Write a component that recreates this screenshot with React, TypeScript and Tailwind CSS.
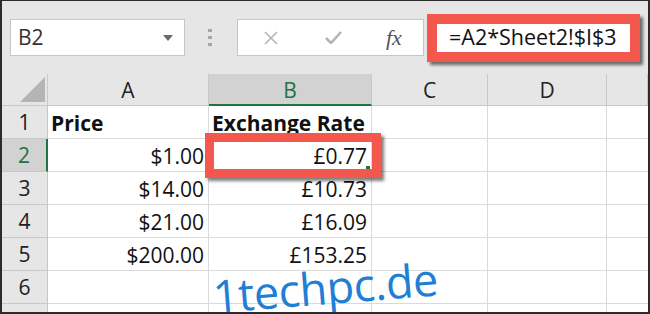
import React from 'react';

const cols = ['A', 'B', 'C', 'D', 'E'];

const rows: { a: string; b: string; bold?: boolean }[] = [
  { a: 'Price', b: 'Exchange Rate', bold: true },
  { a: '$1.00', b: '£0.77' },
  { a: '$14.00', b: '£10.73' },
  { a: '$21.00', b: '£16.09' },
  { a: '$200.00', b: '£153.25' },
  { a: '', b: '' },
  { a: '', b: '' },
];

const App: React.FC = () => {
  return (
    <div className="w-[650px] h-[314px] overflow-hidden border-t border-x-2 border-b-2 border-[#2b2b2b] bg-[#e6e6e6] flex flex-col font-['Open_Sans',sans-serif]">
      {/* formula bar */}
      <div className="h-[73px] shrink-0 flex items-center pl-[8px]">
        <div className="w-[175px] h-[37px] bg-white border border-[#c6c6c6] flex items-center justify-between pl-[7px] pr-[11px]">
          <span className="text-[21px] text-[#333]">B2</span>
          <svg width="10" height="6" viewBox="0 0 10 6">
            <path d="M0 0 L10 0 L5 6 Z" fill="#6b6b6b" />
          </svg>
        </div>
        <div className="ml-[23px] w-[4px] flex flex-col gap-[4px]">
          <div className="w-[4px] h-[3px] bg-[#a6a6a6]" />
          <div className="w-[4px] h-[3px] bg-[#a6a6a6]" />
          <div className="w-[4px] h-[3px] bg-[#a6a6a6]" />
        </div>
        <div className="ml-[25px] w-[187px] h-[37px] bg-white border border-[#c6c6c6] flex items-center">
          <svg className="ml-[26px]" width="14" height="14" viewBox="0 0 14 14">
            <path d="M1 1 L13 13 M13 1 L1 13" stroke="#b3b3b3" strokeWidth="1.6" />
          </svg>
          <svg className="ml-[47px]" width="17" height="13" viewBox="0 0 17 13">
            <path d="M1 7 L6 12 L16 1" stroke="#b3b3b3" strokeWidth="2.6" fill="none" />
          </svg>
          <span className="ml-[44px] text-[22px] italic text-[#555] font-['Liberation_Serif',serif] leading-none">fx</span>
        </div>
        <div className="ml-[3px] w-[213px] h-[48px] border-[10px] border-[#f4574b] bg-white shadow-[3px_3px_3px_rgba(0,0,0,0.55)] flex items-center pl-[12px]">
          <span className="text-[21.5px] text-[#111] whitespace-nowrap">=A2*Sheet2!$I$3</span>
        </div>
      </div>

      {/* grid */}
      <div className="relative flex-1 bg-white">
        <div className="grid grid-cols-[46px_161px_163px_116px_119px_1fr] grid-rows-[32px_repeat(7,33px)]">
          <div className="relative bg-[#e6e6e6] border-r border-b border-[#c8c8c8]">
            <div className="absolute right-[2px] bottom-[3px] w-0 h-0 border-l-[25px] border-l-transparent border-b-[25px] border-b-[#b4b4b4]" />
          </div>
          {cols.map((c) => (
            <div
              key={c}
              className={
                c === 'B'
                  ? 'bg-[#d2d2d2] border-r border-[#c8c8c8] border-b-2 border-b-[#217346] flex items-center justify-center pt-[3px] text-[21px] text-[#217346]'
                  : 'bg-[#e6e6e6] border-r border-b border-[#c8c8c8] flex items-center justify-center pt-[3px] text-[21px] text-[#222]'
              }
            >
              {c === 'E' ? '' : c}
            </div>
          ))}
          {rows.map((r, i) => (
            <React.Fragment key={i}>
              <div
                className={
                  i === 1
                    ? 'bg-[#d2d2d2] border-b border-[#c8c8c8] border-r-2 border-r-[#217346] flex items-center justify-center pt-[2px] text-[21px] text-[#217346]'
                    : 'bg-[#e6e6e6] border-r border-b border-[#c8c8c8] flex items-center justify-center pt-[2px] text-[21px] text-[#222]'
                }
              >
                {i < 6 ? i + 1 : ''}
              </div>
              <div
                className={`border-r border-b border-[#dadada] flex items-center pt-[4px] text-[21px] text-[#111] whitespace-nowrap ${
                  r.bold ? 'font-bold justify-start pl-[3px]' : 'justify-end pr-[4px]'
                }`}
              >
                {r.a}
              </div>
              <div
                className={`relative border-r border-b border-[#dadada] flex items-center pt-[4px] text-[21px] text-[#111] whitespace-nowrap ${
                  r.bold ? 'font-bold justify-start pl-[3px]' : 'justify-end pr-[4px]'
                }`}
              >
                {r.b}
                {i === 1 && <div className="absolute right-[1px] bottom-[1px] w-[4px] h-[4px] bg-[#217346]" />}
              </div>
              <div className="border-r border-b border-[#dadada]" />
              <div className="border-r border-b border-[#dadada]" />
              <div className="border-b border-[#dadada]" />
            </React.Fragment>
          ))}
        </div>

        {/* annotation around B2 */}
        <div className="absolute left-[203px] top-[59px] w-[176px] h-[45px] border-[9px] border-[#f4574b] shadow-[3px_3px_3px_rgba(0,0,0,0.5)]" />

        {/* watermark */}
        <div className="absolute left-[211px] top-[199px] -rotate-[4.5deg] origin-left text-[45px] leading-none tracking-[-0.5px] text-[#1f7fd5] whitespace-nowrap">
          1techpc.de
        </div>
      </div>
    </div>
  );
};

export default App;
